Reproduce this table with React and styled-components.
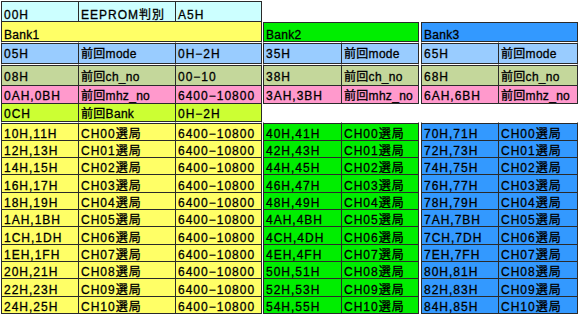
import React from 'react';
import styled, { createGlobalStyle } from 'styled-components';

const GlobalStyle = createGlobalStyle`
  html, body {
    margin: 0;
    padding: 0;
    background: #fff;
  }
  body {
    font-family: "Liberation Sans", "Noto Sans CJK JP", sans-serif;
    font-size: 12px;
    color: #000;
  }
`;

const LINE = '#2a2a2a';

// column widths include each cell's right border
const BANK1_COLS = '77px 97px 86px';
const BANK2_COLS = '78px 77px';
const BANK3_COLS = '77px 79px';

// row heights of the channel rows (first one carries its top border)
const DATA_H = [18, 17, 17, 18, 17, 17, 18, 17, 17, 18, 17];

const hex = (n) => n.toString(16).toUpperCase().padStart(2, '0') + 'H';

const makeData = (base, withRange) =>
  Array.from({ length: 11 }, (_, i) => {
    const a = base + i * 2;
    const cells = [`${hex(a)},${hex(a + 1)}`, `CH${String(i).padStart(2, '0')}選局`];
    if (withRange) cells.push('6400−10800');
    return cells;
  });

const Sheet = styled.div`
  display: flex;
  align-items: flex-start;
  width: 580px;
  height: 315px;
  padding: 1px 0 0 1px;
  box-sizing: border-box;
  overflow: hidden;
`;

const Panel = styled.div`
  display: flex;
  flex-direction: column;
  margin-left: ${(p) => p.$offset || 0}px;
`;

const Row = styled.div`
  display: grid;
  grid-template-columns: ${(p) => p.$cols};
  height: ${(p) => p.$h}px;
  box-sizing: border-box;
  background: ${(p) => p.$bg};
  border-left: 1px solid ${LINE};
  border-bottom: 1px solid ${LINE};
  border-top: ${(p) => (p.$top ? `1px solid ${LINE}` : 'none')};
`;

const Cell = styled.div`
  display: flex;
  align-items: flex-end;
  grid-column: ${(p) => (p.$span ? '1 / -1' : 'auto')};
  padding: 0 0 ${(p) => p.$pb || 0}px 2px;
  box-sizing: border-box;
  border-right: 1px solid ${LINE};
  line-height: 12px;
  letter-spacing: ${(p) => (p.$tight ? '0.3px' : '1px')};
  white-space: nowrap;
  -webkit-text-stroke: 0.3px #000;
`;

const Gap = styled.div`
  display: grid;
  grid-template-columns: ${(p) => p.$cols};
  height: 1px;
  border-left: 1px solid #9a9a9a;
`;

const GapCell = styled.div`
  border-right: 1px solid #9a9a9a;
`;

const Spacer = styled.div`
  height: ${(p) => p.$h}px;
`;

const isLabel = (text) => /[a-z]/.test(text) && !/選局/.test(text);

function CellRow({ cols, h, top, bg, pb, cells }) {
  return (
    <Row $cols={cols} $h={h} $top={top} $bg={bg}>
      {cells.map((c, i) => (
        <Cell key={i} $pb={pb} $tight={isLabel(c)}>
          {c}
        </Cell>
      ))}
    </Row>
  );
}

function GapRow({ cols }) {
  const n = cols.split(' ').length;
  return (
    <Gap $cols={cols}>
      {Array.from({ length: n }, (_, i) => (
        <GapCell key={i} />
      ))}
    </Gap>
  );
}

function BankPanel({ cols, offset, lead, title, titleBg, headers, tail, data, dataBg }) {
  return (
    <Panel $offset={offset}>
      {lead ? <CellRow cols={cols} h={21} top bg="#ccffff" cells={lead} /> : <Spacer $h={21} />}
      <Row $cols={cols} $h={20} $top={!lead} $bg={titleBg}>
        <Cell $span $tight>
          {title}
        </Cell>
      </Row>
      <GapRow cols={cols} />
      <CellRow cols={cols} h={21} top bg="#99ccff" pb={3} cells={headers[0]} />
      <GapRow cols={cols} />
      <CellRow cols={cols} h={21} top bg="#c4d79b" pb={2} cells={headers[1]} />
      <CellRow cols={cols} h={18} bg="#ff99cc" pb={1} cells={headers[2]} />
      {tail ? <CellRow cols={cols} h={18} bg="#ccff33" pb={1} cells={tail} /> : <Spacer $h={18} />}
      <GapRow cols={cols} />
      {data.map((cells, i) => (
        <CellRow key={i} cols={cols} h={DATA_H[i]} top={i === 0} bg={dataBg} cells={cells} />
      ))}
    </Panel>
  );
}

export default function App() {
  return (
    <>
      <GlobalStyle />
      <Sheet>
        <BankPanel
          cols={BANK1_COLS}
          lead={['00H', 'EEPROM判別', 'A5H']}
          title="Bank1"
          titleBg="#ffff66"
          headers={[
            ['05H', '前回mode', '0H−2H'],
            ['08H', '前回ch_no', '00−10'],
            ['0AH,0BH', '前回mhz_no', '6400−10800'],
          ]}
          tail={['0CH', '前回Bank', '0H−2H']}
          data={makeData(0x10, true)}
          dataBg="#ffff66"
        />
        <BankPanel
          cols={BANK2_COLS}
          offset={1}
          title="Bank2"
          titleBg="#00ee00"
          headers={[
            ['35H', '前回mode'],
            ['38H', '前回ch_no'],
            ['3AH,3BH', '前回mhz_no'],
          ]}
          data={makeData(0x40, false)}
          dataBg="#00ee00"
        />
        <BankPanel
          cols={BANK3_COLS}
          offset={2}
          title="Bank3"
          titleBg="#3399ff"
          headers={[
            ['65H', '前回mode'],
            ['68H', '前回ch_no'],
            ['6AH,6BH', '前回mhz_no'],
          ]}
          data={makeData(0x70, false)}
          dataBg="#3399ff"
        />
      </Sheet>
    </>
  );
}
